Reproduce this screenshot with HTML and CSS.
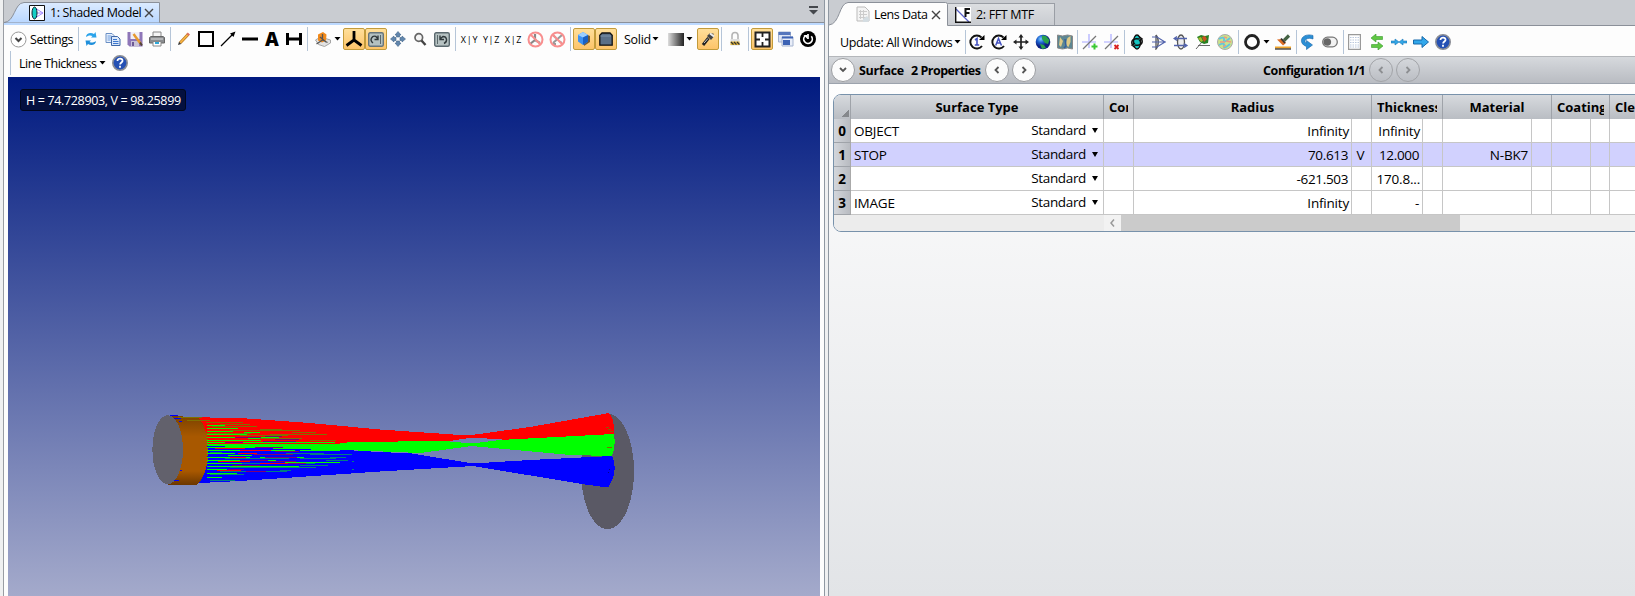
FILE: index.html
```html
<!DOCTYPE html>
<html lang="en">
<head>
<meta charset="utf-8">
<title>Lens Design</title>
<link rel="stylesheet" href="styles.css">
</head>
<body>
<div class="app">
<section class="pane model">
  <header class="tabs">
    <div class="tab tab-model">
      <svg class="tab-bg" width="156" height="21" viewBox="0 0 156 21"><defs><linearGradient id="tb" x2="0" y2="1"><stop offset="0" stop-color="#dcebff"/><stop offset="1" stop-color="#b9d7ff"/></linearGradient></defs><path d="M0 20.5C11 20 10 1 20 .5H155.500V20.500" fill="url(#tb)" stroke="#8b9099"/></svg>
      <svg class="ic" width="16" height="16" viewBox="0 0 16 16"><path fill="#fff" stroke="#111" d="M.5.5h15v15H.5z"/><path d="M6 3l8 5-8 5M6 8h8" fill="none" stroke="#a58cff"/><ellipse cx="5.500" cy="8" rx="2.500" ry="6" fill="#16cfc6" stroke="#123"/></svg>
      <span class="t tab-a">1: Shaded Model</span>
      <svg class="x" width="10" height="10" viewBox="0 0 10 10"><path d="M1 1l8 8M9 1l-8 8" stroke="#444" stroke-width="1.400"/></svg>
    </div>
    <svg class="tabmenu" width="9" height="9" viewBox="0 0 9 9"><path d="M0 0h9v2H0zM0 4h9L4.500 8.500z" fill="#45484d"/></svg>
  </header>
  <div class="tools tools-l">
    <div class="row">
      <svg class="chev" width="17" height="17" viewBox="0 0 17 17"><circle cx="8.500" cy="8.500" r="7.500" fill="#fff" stroke="#999"/><path d="M5.500 7l3 3 3-3" fill="none" stroke="#444" stroke-width="2"/></svg>
      <span class="t settings">Settings</span>
      <i class="sep"></i>
      <span class="b"><svg width="16" height="16" viewBox="0 0 16 16"><path d="M3 6c0-4 5-5 8-3l1.500-2 1 5.500H8L9.500 5C7 4 5 4.500 3 6z" fill="#2aa3ea"/><path d="M13 10c0 4-5 5-8 3l-1.500 2-1-5.500H8L6.500 11C9 12 11 11.500 13 10z" fill="#1f8fdb"/></svg></span>
      <span class="b"><svg width="16" height="16" viewBox="0 0 16 16"><path d="M1 2.500h6l2 2v7H1z" fill="#e8f1fc" stroke="#6a8fc4"/><path d="M2.500 5h4M2.500 7h4M2.500 9h3" stroke="#6a9be0"/><path d="M6.500 5.500h6l2.500 2.500v6.500H6.500z" fill="#dbe9fb" stroke="#3f68a8"/><path d="M8 8.500h4M8 10.500h5.500M8 12.500h5.500" stroke="#3d78cf"/></svg></span>
      <span class="b"><svg width="16" height="16" viewBox="0 0 16 16"><path d="M.5 1h15v14.500H2.500l-2-2z" fill="#8e76b8"/><path d="M3.500 1h9v7h-9z" fill="#f1eff6"/><path d="M4 10h8v5.500H4z" fill="#c9c2d8"/><path d="M5 11h2v4H5z" fill="#6d5a95"/><path d="M6.500 3l7 9.500" stroke="#e79a2f" stroke-width="2.500"/><path d="M13 11.500l2 3" stroke="#543" stroke-width="2"/></svg></span>
      <span class="b"><svg width="16" height="16" viewBox="0 0 16 16"><path d="M4 1h8v5H4z" fill="#f5f5f5" stroke="#888"/><path d="M.5 6.500l1.500-1h12l1.500 1V12H.5z" fill="#8b8d90" stroke="#666"/><path d="M2 8h12" stroke="#ddd"/><path d="M4 10.500h8v4.500H4z" fill="#fff" stroke="#888"/><path d="M6 11h4v2H6z" fill="#2fa8d8"/></svg></span>
      <i class="sep"></i>
      <span class="b"><svg width="16" height="16" viewBox="0 0 16 16"><path d="M4 12L12 3.500" stroke="#b8751d" stroke-width="3"/><path d="M4 12L12 3.500" stroke="#f7b545" stroke-width="1.800"/><path d="M11.500 4l1.400-1.600" stroke="#dc6f5c" stroke-width="3"/><path d="M3 10.800L2 14l3.200-1z" fill="#333"/></svg></span>
      <span class="b"><svg width="16" height="16" viewBox="0 0 16 16"><path d="M1 1h14v14H1z" fill="none" stroke="#000" stroke-width="2"/></svg></span>
      <span class="b"><svg width="16" height="16" viewBox="0 0 16 16"><path d="M1 15L13 3" stroke="#000" stroke-width="1.300"/><path d="M15.500.5l-2 5.500-3.500-3.500z"/></svg></span>
      <span class="b"><svg width="16" height="16" viewBox="0 0 16 16"><path d="M0 6.500h16v3H0z"/></svg></span>
      <span class="b glyph-a">A</span>
      <span class="b"><svg width="16" height="16" viewBox="0 0 16 16"><path d="M1.500 2v12M14.500 2v12M0 8h16" stroke="#000" stroke-width="3" fill="none"/></svg></span>
      <i class="sep"></i>
      <span class="b cube-btn"><svg width="16" height="16" viewBox="0 0 16 16"><path d="M.5 9l5-3 10 3v3l-6 3.500-6-2z" fill="#e2e2e2" stroke="#a5a5a5"/><path d="M3 3.500l5-2.500 3.500 2.500-.5 6-4 2-4-2z" fill="#f18a1c"/><path d="M7.500 3v6M7.500 9l-6 4M7.500 9l5 2.500M5 6l6 5" stroke="#555" stroke-width="1.300"/></svg></span>
      <svg class="caret" width="7" height="4" viewBox="0 0 7 4"><path d="M.5 0h6l-3 3.500z"/></svg>
      <span class="b on"><svg width="18" height="18" viewBox="0 0 18 18"><path d="M9 1v9.500M9 10l-7.500 5.500M9 10l7.500 5.500" stroke="#000" stroke-width="2.800" fill="none"/></svg></span>
      <span class="b on"><svg width="16" height="15" viewBox="0 0 16 15"><rect x=".7" y=".7" width="14.600" height="13.600" rx="1.500" fill="#b4c1c1" stroke="#66757c" stroke-width="1.400"/><path d="M5 11C1 8 4 3 8 4.500L10 7M10 3.500V7.500H6.500" fill="none" stroke="#30393c" stroke-width="1.400"/><path d="M12.500 3v9" stroke="#5a686b"/></svg></span>
      <span class="b"><svg width="16" height="16" viewBox="0 0 16 16" fill="#6186ad" stroke="#42648a" stroke-width=".6"><path d="M8 .5L11 4H9.500v2h-3V4H5zM8 15.500L5 12h1.500v-2h3v2H11zM.5 8L4 5v1.500h2v3H4V11zM15.500 8L12 11V9.500h-2v-3h2V5z"/></svg></span>
      <span class="b"><svg width="16" height="16" viewBox="0 0 16 16"><circle cx="6.800" cy="6.500" r="3.800" fill="#f5f5f5" stroke="#666" stroke-width="1.700"/><path d="M9.500 9.500L13.500 14" stroke="#444" stroke-width="2.400"/></svg></span>
      <span class="b"><svg width="16" height="15" viewBox="0 0 16 15"><rect x=".7" y=".7" width="14.600" height="13.600" rx="1.500" fill="#b6c2c2" stroke="#5b696f" stroke-width="1.400"/><path d="M10 11.500c4-2 3-7-1-7L6 7M6 3.500V7.500h4" fill="none" stroke="#30393c" stroke-width="1.400"/><path d="M3.500 3v9" stroke="#5a686b"/></svg></span>
      <i class="sep"></i>
      <span class="b axis">X|Y</span><span class="b axis">Y|Z</span><span class="b axis">X|Z</span>
      <span class="b"><svg width="17" height="17" viewBox="0 0 17 17"><path d="M8 3v6l-5 4M8 9l5 3" stroke="#888" stroke-width="2.200" fill="none"/><circle cx="8.500" cy="8.500" r="7" fill="none" stroke="#f88f8f" stroke-width="2"/><path d="M3.500 3.500l10 10" stroke="#f88f8f" stroke-width="2"/></svg></span>
      <span class="b"><svg width="17" height="17" viewBox="0 0 17 17"><path d="M4 12l9-8M4 4l3 3M10 10l3 2M4 13h3" stroke="#999" stroke-width="2" fill="none"/><circle cx="8.500" cy="8.500" r="7" fill="none" stroke="#f88f8f" stroke-width="2"/><path d="M3.500 3.500l10 10" stroke="#f88f8f" stroke-width="2"/></svg></span>
      <i class="sep"></i>
      <span class="b on"><svg width="16" height="16" viewBox="0 0 16 16"><path d="M8 2.500l6 2.500v6l-6 4z" fill="#765c35"/><path d="M2 4l5-3 5 3v6.500l-5 3.500-5-3.500z" fill="#3c91f2"/><path d="M2 4l5-3 5 3-5 2.500z" fill="#9ccfff"/><path d="M7 6.500L12 4v6.500L7 14z" fill="#1961c4"/></svg></span>
      <span class="b on"><svg width="16" height="16" viewBox="0 0 16 16"><path d="M4 2h8l2.200 2.200V14.200H1.800V4.200z" fill="#5a7088" stroke="#111" stroke-width="1.300"/><path d="M2.500 5h10.500" fill="none" stroke="#7d93a9"/></svg></span>
      <span class="t solid">Solid</span>
      <svg class="caret c-solid" width="7" height="4" viewBox="0 0 7 4"><path d="M.5 0h6l-3 3.500z"/></svg>
      <i class="fade"></i>
      <svg class="caret c-fade" width="7" height="4" viewBox="0 0 7 4"><path d="M.5 0h6l-3 3.500z"/></svg>
      <span class="b on"><svg width="16" height="16" viewBox="0 0 16 16"><path d="M3 14l5.500-7" stroke="#222" stroke-width="3"/><path d="M7 5l4 4 2.500-3V2.500H9.500z" fill="#444"/><path d="M4 12l4-4.500" stroke="#ccc"/><path d="M10 2.500l4 3" stroke="#eee" stroke-width="2"/></svg></span>
      <i class="sep"></i>
      <span class="b"><svg width="12" height="16" viewBox="0 0 12 16"><path d="M3 9V4.500a3 3 0 016 0V9" fill="none" stroke="#b4b4b4" stroke-width="1.600"/><path d="M1.500 8h9v6.500h-9z" fill="#dedede"/><path d="M1.500 10.500h9V14h-9z" fill="#e5b83a"/><path d="M2 11l2.500 2.500M5 11l2.500 2.500M8 11l2.500 2.500" fill="none" stroke="#333" stroke-width="1.300"/></svg></span>
      <i class="sep"></i>
      <span class="b on"><svg width="17" height="17" viewBox="0 0 17 17"><path d="M1.500 1.500h14v14h-14z" fill="#fff" stroke="#222" stroke-width="2"/><path d="M8.500 2v4M8.500 11v4M2 8.500h4M11 8.500h4" stroke="#222" stroke-width="1.800"/></svg></span>
      <span class="b win"><svg width="16" height="16" viewBox="0 0 16 16"><path d="M.5 1h12v10H.5z" fill="#dce4f5" stroke="#a6b4d0"/><path d="M.5 1h12v3H.500z" fill="#5576bd"/><path d="M4 6h11v9H4z" fill="#e8edf8" stroke="#a6b4d0"/><path d="M4 5.500h11v2H4zM5 9h7v5H5z" fill="#3d63b5"/></svg></span>
      <span class="b"><svg width="16" height="16" viewBox="0 0 16 16"><circle cx="8" cy="8" r="8"/><path d="M5 5a4.300 4.300 0 106.300.3M8 3v5" fill="none" stroke="#fff" stroke-width="1.700"/><path d="M3.500 4h4v4z" fill="#fff"/></svg></span>
    </div>
    <div class="row row2">
      <i class="sep"></i><span class="t thick">Line Thickness</span>
      <svg class="caret" width="7" height="4" viewBox="0 0 7 4"><path d="M.5 0h6l-3 3.500z"/></svg>
      <svg class="help" width="16" height="16" viewBox="0 0 16 16"><circle cx="8" cy="8" r="7.200" fill="#2450b4" stroke="#8a8d95" stroke-width="1.600"/><path d="M5.500 6c0-3.500 5.500-3 5 0-.3 1.500-2.300 1.500-2.400 3.500M8 10.700v2" fill="none" stroke="#fff" stroke-width="1.800"/></svg>
    </div>
  </div>
  <div class="canvas">
    <svg class="scene" viewBox="8 77 812 519" shape-rendering="crispEdges">
      <defs><linearGradient id="or" x2="0" y2="1"><stop offset="0" stop-color="#7a4200"/><stop offset=".3" stop-color="#a85800"/><stop offset=".8" stop-color="#a85800"/><stop offset="1" stop-color="#6b3700"/></linearGradient></defs>
      <ellipse cx="607.500" cy="471.300" rx="26.500" ry="57.800" fill="#5a5965"/>
      <path fill="#f00" d="M180 417L240 418 310 423 380 429.500 468 435.500 530 427 609 413Q614 417 614.500 434L510 440 472 437.500 450 441 380 444H208z"/>
      <path fill="#00f" d="M208 445L345 450 380 452 412 453.500 473 463.500 530 460 612 456Q619 471 608 487.500L585 484.500 473 466 380 471.500 240 481 180 484z"/>
      <path fill="#0f0" d="M208 444L330 445 350 442 445 441 472 443.500 500 440 614 434Q616 447 612 456L570 455 472 446 420 453 345 450 208 448z"/>
      <path d="M168 415.500L198 417.500C206 424 208.500 440 208.500 451 208.500 465 203 480 197 485L168 485z" fill="url(#or)"/>
      <path class="scan" stroke="#0f0" d="M207 425h18M207 428h31M207 431h26M207 434h40M207 437h72M207 440h54M207 442h128M207 444h160M207 447h175M207 450h88M207 453h28M207 457h43M207 460h69M207 463h55M285 462h55M207 466h92M207 469h20M207 473h30M207 477h15M248 438h32M244 432h16M260 457h44M300 450h40M228 455h24"/>
      <path class="scan" stroke="#807000" d="M178 417h24M187 420h23M206 422h37M212 426h45M220 424h30M230 430h70M260 429h22M240 435h48M270 434h57M292 432h24M260 438h42M310 440h26M206 433h45"/>
      <path class="scan" stroke="#007f80" d="M210 452h40M225 458h64M242 463h73M230 467h86M220 471h67M210 474h34M210 480h25M300 458h36M310 454h38M326 460h22M300 465h28M280 470h11M286 453h38M348 454h4M352 461h2M330 457h16M352 469h2"/>
      <path class="scan" stroke="#800070" d="M235 437h26M265 436h17M275 439h24M225 442h18M263 441h33M254 454h39M240 460h28M270 461h26M232 465h28M284 463h22M246 471h20M228 469h16M275 451h24M255 447h28M265 457h32"/>
      <path class="scan" stroke="#f00" d="M215 448h36M238 453h19M218 461h32M230 457h16M260 463h28M217 470h24M240 450h31"/>
      <path class="scan" stroke="#00f" d="M207 446h18M212 449h45M222 452h60M207 456h22M230 462h25M207 465h14M214 468h36M245 448h28M170 415h8M174 418h7M179 421h3M178 470h4M173 480h6"/>
      <ellipse cx="167.700" cy="449.700" rx="15.300" ry="34.500" fill="#62616c"/>
      <path d="M606 427h3M608 429h3M610 431h3M607 447h5" stroke="#876100"/><path d="M608 472h1M609 469h1" stroke="#008"/>
    </svg>
    <div class="coords"><span class="t">H = 74.728903, V = 98.25899</span></div>
  </div>
</section>
<section class="pane data">
  <header class="tabs">
    <div class="tab tab-lens">
      <svg class="tab-bg" width="120" height="24" viewBox="0 0 120 24"><path d="M0 24V23C11 22 10 1 19 .5H116.500q2 0 2 2V24" fill="#fdfdfd"/><path d="M0 23C11 22 10 1 19 .5H116.500q2 0 2 2V23.500" fill="none" stroke="#8b9099"/></svg>
      <svg class="ic" width="14" height="17" viewBox="0 0 14 17"><path d="M1 1h8l4 4v10H1z" fill="#f4f4f4" stroke="#bbb"/><path d="M3 5.500h8M3 8.500h8M3 11.500h8M4.500 4v9M7.500 4v9" stroke="#ccc"/><path d="M7 13l4-3 3 4-3 2H7z" fill="#d4dde2"/></svg>
      <span class="t tab-b">Lens Data</span>
      <svg class="x" width="10" height="10" viewBox="0 0 10 10"><path d="M1 1l8 8M9 1l-8 8" stroke="#444" stroke-width="1.400"/></svg>
    </div>
    <div class="tab tab-mtf">
      <svg class="ic" width="16" height="16" viewBox="0 0 16 16"><path d="M0 0h16v16H0z" fill="#fff"/><path d="M1 2l13 13" stroke="#5960c8" stroke-width="1.200"/><path d="M.7 0v15.300H16" fill="none" stroke="#111" stroke-width="1.400"/><path d="M10.500 10V2H15M10.500 6h4" fill="none" stroke="#111" stroke-width="2"/></svg>
      <span class="t tab-c">2: FFT MTF</span>
    </div>
  </header>
  <div class="tools tools-r">
    <span class="t update">Update: All Windows</span>
    <svg class="caret" width="7" height="4" viewBox="0 0 7 4"><path d="M.5 0h6l-3 3.500z"/></svg>
    <i class="sep first"></i>
    <span class="b"><svg width="16" height="16" viewBox="0 0 16 16"><path d="M12.500 3.500A6.500 6.500 0 1013 12" fill="none" stroke="#111" stroke-width="1.900"/><path d="M10 6h5.500V1z"/><path d="M6 6l2-1.500V11M5.800 11h4.400" fill="none" stroke="#4452c0" stroke-width="1.600"/></svg></span>
    <span class="b"><svg width="16" height="16" viewBox="0 0 16 16"><path d="M12.500 3.500A6.500 6.500 0 1013 12" fill="none" stroke="#111" stroke-width="1.900"/><path d="M10 6h5.500V1z"/><path d="M4.700 11.500L7.500 4.500l3 7M6 9h3.500" fill="none" stroke="#4452c0" stroke-width="1.500"/></svg></span>
    <span class="b"><svg width="16" height="16" viewBox="0 0 16 16"><path d="M8 2v12M2 8h12" stroke="#222" stroke-width="1.700"/><path d="M8 0l2.500 3.500h-5zM8 16l2.500-3.500h-5zM0 8l3.500-2.500v5zM16 8l-3.500-2.500v5z" fill="#222"/></svg></span>
    <span class="b"><svg width="16" height="16" viewBox="0 0 16 16"><defs><radialGradient id="gl" cx=".35" cy=".3"><stop offset="0" stop-color="#7fd0ff"/><stop offset=".5" stop-color="#1d62d0"/><stop offset="1" stop-color="#0a1f83"/></radialGradient></defs><circle cx="8" cy="8" r="7.300" fill="url(#gl)"/><path d="M7 1.500l4 .5 3.500 4-1.500 4-3-1-3-4zM5 10l4 1 2 3-4 1z" fill="#28a04c"/></svg></span>
    <span class="b"><svg width="16" height="16" viewBox="0 0 16 16"><path d="M.5 1l5 1 5-1 5 1v13l-5-1-5 1-5-1z" fill="#5c8692" stroke="#888"/><path d="M3 3l3 4-2 6-2-2zM10.500 4l3-2v6l-2 5-3-2z" fill="#ddc987"/><path d="M8 5l1 7-2 2" stroke="#315fa0" stroke-width="1.500" fill="none"/></svg></span>
    <i class="sep tight"></i>
    <span class="b"><svg width="16" height="16" viewBox="0 0 16 16"><path d="M0 8h14M7 0v14" stroke="#c3c3ff" stroke-width="1.700"/><path d="M1 15L14 2" stroke="#777" stroke-width="1.200"/><path d="M9.500 12.500h6M12.500 9.500v6" stroke="#39c832" stroke-width="2"/></svg></span>
    <span class="b"><svg width="16" height="16" viewBox="0 0 16 16"><path d="M0 8h14M7 0v14" stroke="#c3c3ff" stroke-width="1.700"/><path d="M1 15L14 2" stroke="#777" stroke-width="1.200"/><path d="M10.500 11l4 4M14.500 11l-4 4" stroke="#d82020" stroke-width="1.800"/></svg></span>
    <i class="sep tight"></i>
    <span class="b"><svg width="16" height="16" viewBox="0 0 16 16"><ellipse cx="8" cy="8" rx="3.500" ry="7" fill="#14c4c0" stroke="#111" stroke-width="1.300"/><path d="M3 10c-1-4 2-6 7-5M10 2.500L13 5 10 7M13 6c1 4-2 6-7 5M6 9l-3 2 3 2.500" fill="none" stroke="#111" stroke-width="1.500"/></svg></span>
    <span class="b"><svg width="16" height="16" viewBox="0 0 16 16"><path d="M5 1c3 3 3 11 0 14V1" fill="#eee" stroke="#555" stroke-width="1.300"/><path d="M1 3h5l8 5-8 5H1M1 8h14" fill="none" stroke="#5364ad" stroke-width="1.200"/></svg></span>
    <span class="b"><svg width="16" height="16" viewBox="0 0 16 16"><ellipse cx="8" cy="8" rx="3.500" ry="7" fill="#eee" stroke="#555" stroke-width="1.300"/><path d="M1 4.500h13M1 11.500h13M4 2.500l-3 2 3 2M11 9.500l3 2-3 2" fill="none" stroke="#5364ad" stroke-width="1.300"/></svg></span>
    <span class="b"><svg width="16" height="16" viewBox="0 0 16 16"><path d="M1 15l6-7M3 11.500h12" stroke="#666"/><path d="M2 3l4-2 4 1 4-1-1 8-4 1-4-2z" fill="#278022"/><path d="M7 3l3-1 2 3-3 3z" fill="#ce5123"/><path d="M3 4l3-1 2 4-2 1z" fill="#a9b92a"/></svg></span>
    <span class="b"><svg width="16" height="16" viewBox="0 0 16 16"><circle cx="8" cy="8" r="7.500" fill="#cbe38a" stroke="#aaa"/><path d="M2 5q6-3 5 1t6-2M2 11q6-3 5 1t6-2" fill="none" stroke="#63c6dd" stroke-width="1.800"/><path d="M3 8h5M9 7l5 1M7 3l3 1M6 13l3-2" stroke="#ee9a80" stroke-width="1.500"/></svg></span>
    <i class="sep"></i>
    <span class="b"><svg width="16" height="16" viewBox="0 0 16 16"><circle cx="8" cy="8" r="6.500" fill="#fff" stroke="#222" stroke-width="2.800"/></svg></span>
    <svg class="caret c-ring" width="7" height="4" viewBox="0 0 7 4"><path d="M.5 0h6l-3 3.500z"/></svg>
    <span class="b"><svg width="16" height="16" viewBox="0 0 16 16"><path d="M14 1.500L9 6.500" stroke="#456344" stroke-width="3.200"/><path d="M2 5.500l5-.5 4 4-3 2.500z" fill="#dc6d26"/><path d="M6 4.500l4 4.500" stroke="#333" stroke-width="1.800"/><path d="M0 13.500h16" stroke="#f0a52b" stroke-width="2"/><path d="M0 15h16" stroke="#222" stroke-width="1.200"/></svg></span>
    <i class="sep before-undo"></i>
    <span class="b undo"><svg width="14" height="16" viewBox="0 0 14 16"><path d="M13 1.500C10 .5 5 .5 2.500 3.500 0 7 2 11 6.500 12.500V15.500L12.500 11 6.500 6.500V9C4.500 8 4.500 6.500 6 5.500 8 4 10 4 13 5z" fill="#2b8fd5" stroke="#1765a8" stroke-width=".6"/></svg></span>
    <span class="b"><svg width="16" height="12" viewBox="0 0 16 12"><rect x=".7" y="1.200" width="14.600" height="9.600" rx="4.800" fill="#f2f2f2" stroke="#777" stroke-width="1.300"/><circle cx="5.300" cy="6" r="3.800" fill="#666"/></svg></span>
    <i class="sep before-doc"></i>
    <span class="b doc"><svg width="13" height="16" viewBox="0 0 13 16"><path d="M.6.6h11.800v14.800H.6z" fill="#fff" stroke="#999" stroke-width="1.200"/><path d="M2 3.500h9M2 6h9M2 8.500h9M2 11h9M2 13h9" stroke="#bbc8dd" stroke-dasharray="1.500 1"/></svg></span>
    <span class="b"><svg width="14" height="16" viewBox="0 0 14 16"><path d="M1 4l5-4v2.500h6.500v3H6V8zM13 12l-5 4v-2.500H1.500v-3H8V8z" fill="#60c843" stroke="#399a2e" stroke-width=".6"/></svg></span>
    <span class="b"><svg width="16" height="8" viewBox="0 0 16 8"><path d="M0 3h4V1l4 3-4 3V5H0zM16 3h-4V1L8 4l4 3V5h4z" fill="#33a7e6" stroke="#1877ba" stroke-width=".6"/></svg></span>
    <span class="b"><svg width="16" height="14" viewBox="0 0 16 14"><path d="M.5 5H9V1.500L15.500 7 9 12.500V9H.5z" fill="#31a7eb" stroke="#1769aa"/></svg></span>
    <span class="b"><svg width="16" height="16" viewBox="0 0 16 16"><circle cx="8" cy="8" r="7.200" fill="#2450b4" stroke="#8a8d95" stroke-width="1.600"/><path d="M5.500 6c0-3.500 5.500-3 5 0-.3 1.500-2.300 1.500-2.400 3.500M8 10.700v2" fill="none" stroke="#fff" stroke-width="1.800"/></svg></span>
  </div>
  <div class="props">
    <span class="round"><svg width="8" height="6" viewBox="0 0 8 6"><path d="M1 1l3 3 3-3" /></svg></span>
    <span class="t p1">Surface</span><span class="t p2">2 Properties</span>
    <span class="round"><svg width="6" height="8" viewBox="0 0 6 8"><path d="M4.500 1l-3 3 3 3"/></svg></span>
    <span class="round r3"><svg width="6" height="8" viewBox="0 0 6 8"><path d="M1.500 1l3 3-3 3"/></svg></span>
    <span class="t p3">Configuration 1/1</span>
    <span class="round off"><svg width="6" height="8" viewBox="0 0 6 8"><path d="M4.500 1l-3 3 3 3"/></svg></span>
    <span class="round off r3"><svg width="6" height="8" viewBox="0 0 6 8"><path d="M1.500 1l3 3-3 3"/></svg></span>
  </div>
  <div class="body">
    <div class="grid">
      <div class="gr head"><div class="corner"></div><div class="w-type">Surface Type</div><div class="w-com clip"><span>Con</span></div><div class="w-rad">Radius</div><div class="w-th clip"><span>Thickness</span></div><div class="w-mat">Material</div><div class="w-coat clip"><span>Coating</span></div><div class="w-cl clip"><span>Clear</span></div></div>
      <div class="gr"><b>0</b><div class="type"><span>OBJECT</span><span class="std">Standard</span></div><div class="c2"></div><div class="c3">Infinity</div><div class="c4"></div><div class="c5">Infinity</div><div class="c6"></div><div class="c7"></div><div class="c8"></div><div class="c9"></div><div class="c10"></div><div class="c11"></div></div>
      <div class="gr sel"><b>1</b><div class="type"><span>STOP</span><span class="std">Standard</span></div><div class="c2"></div><div class="c3 n">70.613</div><div class="c4">V</div><div class="c5 n">12.000</div><div class="c6"></div><div class="c7">N-BK7</div><div class="c8"></div><div class="c9"></div><div class="c10"></div><div class="c11"></div></div>
      <div class="gr"><b>2</b><div class="type"><span></span><span class="std">Standard</span></div><div class="c2"></div><div class="c3 n">-621.503</div><div class="c4"></div><div class="c5">170.8...</div><div class="c6"></div><div class="c7"></div><div class="c8"></div><div class="c9"></div><div class="c10"></div><div class="c11"></div></div>
      <div class="gr"><b>3</b><div class="type"><span>IMAGE</span><span class="std">Standard</span></div><div class="c2"></div><div class="c3">Infinity</div><div class="c4"></div><div class="c5 n">-</div><div class="c6"></div><div class="c7"></div><div class="c8"></div><div class="c9"></div><div class="c10"></div><div class="c11"></div></div>
      <div class="scroll"><div class="pad"></div><div class="arr"><svg width="5" height="8" viewBox="0 0 5 8"><path d="M4 .500L1 4l3 3.500" fill="none" stroke="#999" stroke-width="1.500"/></svg></div><div class="thumb"></div><div class="rest"></div><div class="arr end"><svg width="5" height="8" viewBox="0 0 5 8"><path d="M1 .5L4 4 1 7.500" fill="none" stroke="#aaa" stroke-width="1.500"/></svg></div></div>
    </div>
  </div>
</section>
</div>
</body>
</html>
```
FILE: styles.css
```css
* { box-sizing: border-box; }
body { margin: 0; width: 1635px; height: 596px; overflow: hidden; font-family: "Open Sans", "Noto Sans", sans-serif; font-size: 12.5px; color: #000; background: #eff0f1; }
svg { display: block; flex: none; }
.t { white-space: nowrap; flex: none; letter-spacing: -0.5px; }
.app { display: flex; height: 596px; }
.pane { display: flex; flex-direction: column; flex: none; }
.model { width: 822px; margin-left: 3px; border-left: 1px solid #999da3; background: #fdfdfd; border-right: 1px solid #8f98a2; }
.data { width: 807px; margin-left: 3px; border-left: 1px solid #8f98a2; }
.tabs { display: flex; flex: none; background: #c9ccd1; position: relative; }
.model .tabs { height: 25px; border-bottom: 2px solid #bcd9ff; box-shadow: inset 0 -1px #8b9099; padding-top: 2px; justify-content: space-between; }
.data .tabs { height: 26px; padding-top: 2px; box-shadow: inset 0 -1px #8b9099; }
.tab { position: relative; display: flex; align-items: center; }
.tab > * { position: relative; }
.tab > .tab-bg { position: absolute; left: 0; top: 0; }
.tab-model { width: 156px; height: 21px; padding-left: 25px; }
.tab-a { width: 89px; margin-left: 5px; letter-spacing: -.4px; }
.x { margin-left: 5px; }
.tabmenu { margin: 4px 6px 0 0; }
.tab-lens { width: 119px; height: 24px; padding: 1px 0 0 27px; }
.tab-b { width: 52px; margin-left: 4px; }
.tab-mtf { width: 107px; height: 22px; margin-top: 1px; padding-left: 7px; background: linear-gradient(#dcdee1, #c9ccd1); border: 1px solid #9a9ea5; border-left: 0; border-bottom: 0; }
.tab-c { margin-left: 5px; letter-spacing: -.35px; }
.tools { flex: none; background: #fdfdfd; }
.tools-l { height: 52px; padding-top: 2px; }
.row { display: flex; align-items: center; height: 24px; padding-left: 6px; }
.row2 { height: 24px; margin-top: 0; padding-left: 4px; }
.tools-r { display: flex; align-items: center; height: 31px; padding: 2px 0 0 11px; border-bottom: 1px solid #b4b7bb; }
.settings { width: 43px; margin: 0 5px 0 3px; letter-spacing: -.4px; }
.sep { flex: none; width: 1px; height: 24px; margin: 0 2px; background: #b5c5d8; }
.settings + .sep { margin-left: 0; margin-right: 1px; }
.b { flex: none; width: 22px; height: 22px; display: flex; align-items: center; justify-content: center; }
.on { background: linear-gradient(#ffdf9a, #fdc469); border: 1px solid #c29b3b; border-radius: 2px; }
.glyph-a { font-weight: 800; font-size: 19px; }
.axis { font-size: 9px; letter-spacing: .7px; padding-left: 1px; }
.cube-btn { margin-left: 2px; }
.cube-btn + .caret { margin-right: 2px; }
.solid { width: 27px; margin-left: 7px; letter-spacing: -.3px; }
.c-solid { margin: 0 9px 0 1px; }
.fade { flex: none; width: 16px; height: 13px; background: linear-gradient(90deg, #ddd, #222); }
.c-fade { margin: 0 4px 0 2px; }
.win { margin-left: 2px; }
.thick { width: 76px; margin: 0 4px 0 6px; }
.help { margin-left: 6px; }
.canvas { position: relative; flex: none; width: 812px; height: 519px; margin-left: 4px; background: linear-gradient(#001a80, #a4aacb); }
.scene { width: 812px; height: 519px; }
.scan { fill: none; stroke-width: 1; transform: translateY(.5px); }
.coords { position: absolute; left: 12px; top: 12px; width: 166px; height: 22px; border: 1px solid #01081f; border-radius: 3px; background: #04103f; color: #fff; line-height: 22px; padding-left: 5px; }
.coords .t { letter-spacing: -.35px; }
.update { width: 110px; margin-right: 4px; letter-spacing: -.4px; }
.first { margin-left: 4px; margin-right: 0; }
.tight { margin: 0 1px; }
.c-ring { margin: 0 2px 0 0; }
.before-undo { margin-right: 0; }
.undo { width: 20px; margin-right: 2px; }
.before-doc { margin-right: 0; }
.doc { width: 21px; margin-right: 1px; }
.props { display: flex; align-items: center; flex: none; height: 27px; padding-left: 2px; background: linear-gradient(#d6d9dd, #b9bcc2); border-bottom: 1px solid #9ca3ad; font-weight: 700; }
.round { flex: none; display: flex; align-items: center; justify-content: center; width: 24px; height: 24px; border: 1px solid #9b9da1; border-radius: 50%; background: #fcfcfc; }
.round path { fill: none; stroke: #555; stroke-width: 1.8; }
.off { background: none; border-color: #a2a4a8; }
.off path { stroke: #8c8e91; }
.props .t { line-height: 18px; padding-top: 1px; }
.p1 { width: 43px; margin-left: 4px; letter-spacing: -.3px; }
.p2 { width: 70px; margin: 0 4px 0 9px; }
.r3 { margin-left: 3px; }
.p3 { width: 102px; margin: 0 4px 0 227px; letter-spacing: -.4px; }
.body { flex: 1; padding: 10px 0 0 4px; overflow: hidden; background: linear-gradient(#fefefe, #e2e4e7); }
.grid { width: 820px; height: 138px; border: 1px solid #7892ab; border-radius: 8px; overflow: hidden; background: #fff; }
.gr { display: flex; height: 24px; line-height: 25px; font-size: 13.5px; letter-spacing: -.2px; }
.gr > div { flex: none; border-right: 1px solid #c6c6c6; border-bottom: 1px solid #c6c6c6; overflow: hidden; white-space: nowrap; text-align: right; }
.gr.head > div { border-right-color: #9fa3a9; border-bottom: 0; text-align: center; font-weight: 700; font-size: 13px; letter-spacing: 0; }
.head { background: linear-gradient(#d7dade, #b9bdc3); }
.sel { background: #d1d1fe; }
.gr > b { flex: none; width: 17px; text-align: center; background: linear-gradient(90deg, #d3d6db, #b8bbc1); border-bottom: 1px solid #9fa3a9; border-right: 1px solid #aaa; letter-spacing: 0; }
.gr > .corner { width: 17px; background: linear-gradient(135deg, transparent 50%, #85888c 50%) 8px 15px / 7px 7px no-repeat; }
.gr > .w-type { width: 253px; }
.gr > .w-com { width: 30px; }
.gr > .w-rad { width: 238px; }
.gr > .w-th { width: 71px; }
.gr > .w-mat { width: 109px; }
.gr > .w-coat { width: 58px; }
.gr > .w-cl { width: 90px; }
.head > .clip { padding: 0 5px; }
.clip span { display: block; overflow: hidden; text-align: left; }
.gr > .type { display: flex; justify-content: space-between; width: 253px; padding: 0 5px 0 3px; }
.std { display: flex; align-items: center; letter-spacing: -.35px; }
.std::after { content: ""; margin-left: 6px; border: 3.5px solid transparent; border-top: 5px solid #000; border-bottom: 0; }
.gr > .c2 { width: 30px; }
.gr > .c3 { width: 218px; padding-right: 2px; }
.gr > .c4 { width: 20px; padding-right: 2px; text-align: center; }
.gr > .c5 { width: 51px; padding-right: 2px; }
.gr > .c6 { width: 20px; }
.gr > .c7 { width: 89px; padding-right: 3px; }
.gr > .c8 { width: 20px; }
.gr > .c9 { width: 39px; }
.gr > .c10 { width: 19px; }
.gr > .c11 { width: 90px; }
.gr > .n { padding-right: 3px; letter-spacing: -.35px; }
.scroll { display: flex; height: 16px; background: #ececec; }
.pad { width: 270px; }
.arr { width: 17px; display: flex; align-items: center; justify-content: center; background: #f2f2f2; }
.thumb { width: 339px; background: #cbcbcb; }
.rest { width: 170px; background: #f0f0f0; }
```
